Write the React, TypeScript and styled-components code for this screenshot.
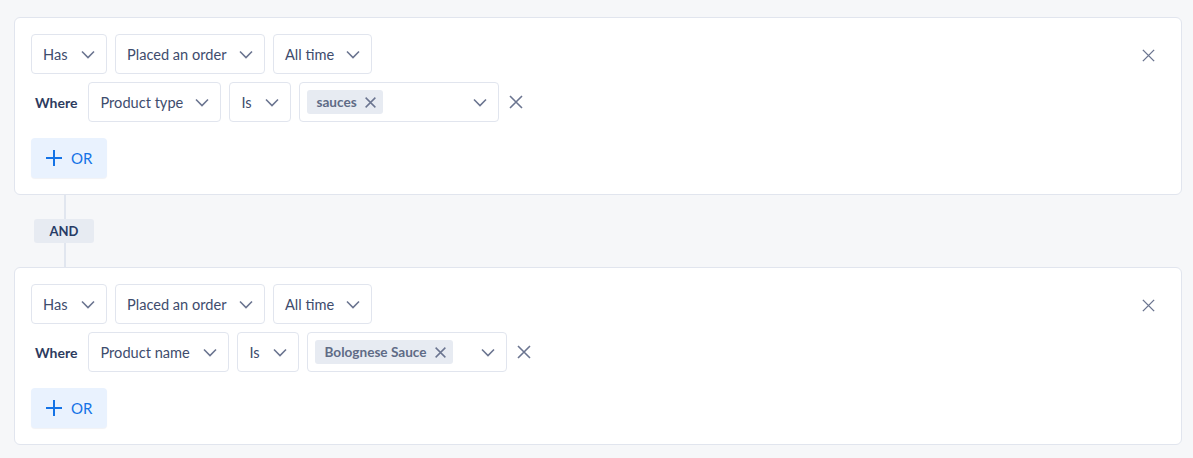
import React from "react";
import styled, { createGlobalStyle } from "styled-components";

const GlobalStyle = createGlobalStyle`
  html, body {
    margin: 0;
    background: #f6f7f9;
    font-family: Lato, "Noto Sans", sans-serif;
  }
`;

const Page = styled.div`
  padding: 17px 11px 14px 14px;
  display: flex;
  flex-direction: column;
`;

const Card = styled.div`
  background: #fff;
  border: 1px solid #e1e5ee;
  border-radius: 6px;
  padding: 16px;
  display: flex;
  align-items: flex-start;
`;

const Body = styled.div`
  flex: 1;
  display: flex;
  flex-direction: column;
  gap: 8px;
`;

const Row = styled.div`
  display: flex;
  align-items: center;
  gap: 8px;
`;

const Where = styled.span`
  font-size: 14px;
  font-weight: 700;
  color: #2d3b5e;
  padding: 0 3px 0 4px;
`;

const Select = styled.div<{ $w: number }>`
  box-sizing: border-box;
  width: ${(p) => p.$w}px;
  height: 40px;
  border: 1px solid #e1e5ee;
  border-radius: 4px;
  display: flex;
  align-items: center;
  justify-content: space-between;
  padding: 0 10px 0 11px;
  font-size: 14.6px;
  color: #3e4c6d;
`;

const Tag = styled.span`
  display: inline-flex;
  align-items: center;
  gap: 7px;
  height: 24px;
  padding: 0 6px 0 9px;
  margin-left: -4px;
  background: #e7ebf2;
  border-radius: 3px;
  font-size: 13.6px;
  font-weight: 700;
  color: #5f6b86;
`;

const IconButton = styled.button`
  border: 0;
  background: none;
  padding: 0;
  display: flex;
  align-items: center;
  color: #6b7590;
  cursor: pointer;
`;

const RemoveRow = styled(IconButton)`
  margin-left: 1px;
`;

const OrButton = styled.button`
  margin-top: 8px;
  align-self: flex-start;
  height: 40px;
  border: 0;
  border-radius: 4px;
  background: #e9f2fe;
  color: #1473e6;
  font-family: inherit;
  font-size: 15px;
  display: flex;
  align-items: center;
  gap: 9px;
  padding: 0 15px;
  box-shadow: 0 1px 1px rgba(20, 40, 80, 0.06);
`;

const CloseCard = styled(IconButton)`
  margin: 14px 9px 0 0;
`;

const Connector = styled.div`
  height: 72px;
  display: flex;
  flex-direction: column;
  align-items: flex-start;
  padding-left: 20px;
`;

const Line = styled.div`
  width: 2px;
  flex: 1;
  margin-left: 30px;
  background: #e1e6ef;
`;

const AndBadge = styled.div`
  width: 60px;
  height: 24px;
  border-radius: 3px;
  background: #e7ebf2;
  color: #273b66;
  font-size: 13px;
  font-weight: 700;
  display: flex;
  align-items: center;
  justify-content: center;
`;

const Chevron = () => (
  <svg width="16" height="16" viewBox="0 0 16 16" fill="none">
    <path d="M2 5.5l6 6 6-6" stroke="#6b7590" strokeWidth="1.6" />
  </svg>
);

const Cross = ({ size = 16, w = 1.6 }: { size?: number; w?: number }) => (
  <svg width={size} height={size} viewBox="0 0 16 16" fill="none">
    <path d="M2 2l12 12M14 2L2 14" stroke="currentColor" strokeWidth={w} />
  </svg>
);

const Plus = () => (
  <svg width="16" height="16" viewBox="0 0 16 16" fill="none">
    <path d="M8 0v16M0 8h16" stroke="#1473e6" strokeWidth="2" />
  </svg>
);

interface Group {
  field: string;
  fieldW: number;
  value: string;
}

const groups: Group[] = [
  { field: "Product type", fieldW: 133, value: "sauces" },
  { field: "Product name", fieldW: 141, value: "Bolognese Sauce" },
];

function Condition({ g }: { g: Group }) {
  return (
    <Card>
      <Body>
        <Row>
          <Select $w={76}>Has<Chevron /></Select>
          <Select $w={150}>Placed an order<Chevron /></Select>
          <Select $w={99}>All time<Chevron /></Select>
        </Row>
        <Row>
          <Where>Where</Where>
          <Select $w={g.fieldW}>{g.field}<Chevron /></Select>
          <Select $w={62}>Is<Chevron /></Select>
          <Select $w={200}>
            <Tag>
              {g.value}
              <IconButton><Cross size={13} w={1.8} /></IconButton>
            </Tag>
            <Chevron />
          </Select>
          <RemoveRow><Cross /></RemoveRow>
        </Row>
        <OrButton><Plus />OR</OrButton>
      </Body>
      <CloseCard><Cross size={15} w={1.5} /></CloseCard>
    </Card>
  );
}

export default function App() {
  return (
    <Page>
      <GlobalStyle />
      <Condition g={groups[0]} />
      <Connector>
        <Line />
        <AndBadge>AND</AndBadge>
        <Line />
      </Connector>
      <Condition g={groups[1]} />
    </Page>
  );
}
